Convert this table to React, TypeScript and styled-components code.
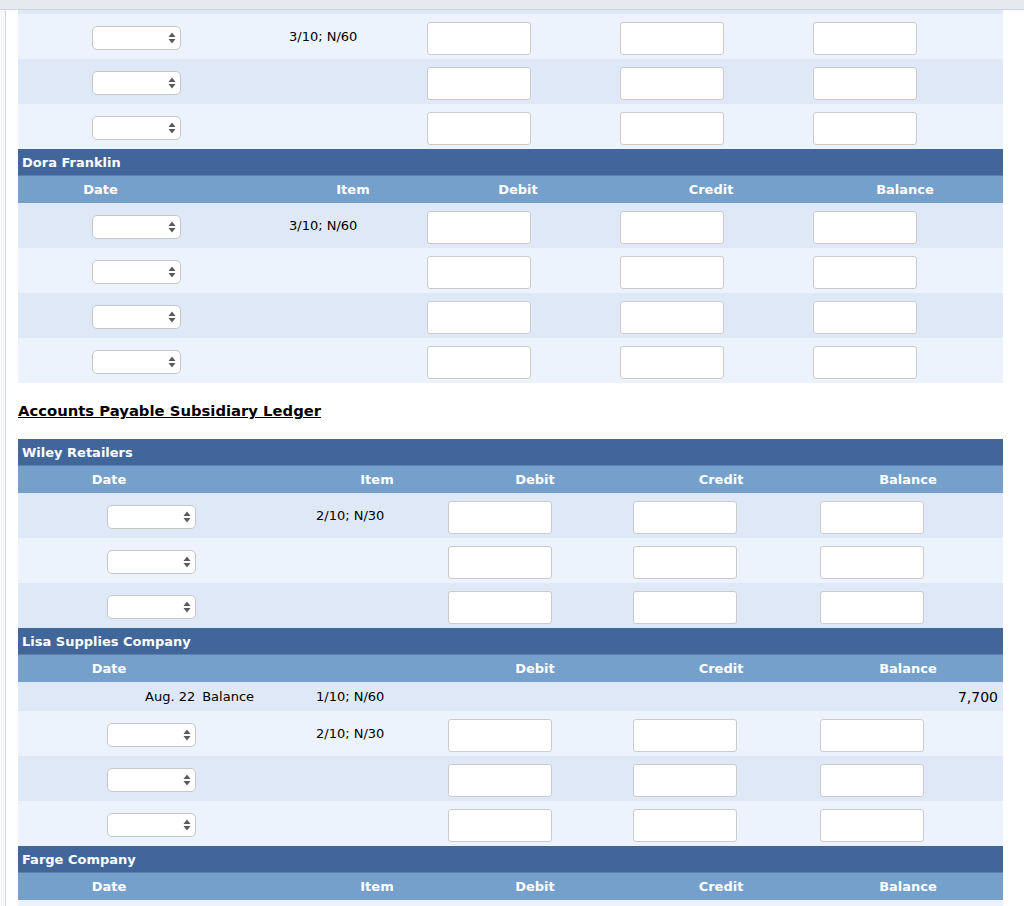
import React from 'react';
import styled, { createGlobalStyle } from 'styled-components';

const GlobalStyle = createGlobalStyle`
  html, body { margin: 0; padding: 0; background: #ffffff; }
  body { font-family: "DejaVu Sans", Verdana, sans-serif; color: #000; }
  * { box-sizing: border-box; }
`;

const COLORS = {
  name: '#41669a',
  head: '#74a0cb',
  dark: '#dfe8f6',
  light: '#edf3fd',
};

type Tone = 'dark' | 'light';

interface Layout {
  rows: string;
  datePad: number;
  head: string;
}

const headTemplate = (centers: number[], w = 80) => {
  let prev = 0;
  const parts: string[] = [];
  centers.forEach((c) => {
    parts.push(`${c - w / 2 - prev}px`, `${w}px`);
    prev = c + w / 2;
  });
  parts.push('1fr');
  return parts.join(' ');
};

const RECEIVABLE: Layout = {
  rows: '271px 138px 193px 193px 1fr',
  datePad: 74,
  head: headTemplate([82.5, 335, 500, 693, 887]),
};

const PAYABLE: Layout = {
  rows: '298px 132px 185px 187px 1fr',
  datePad: 89,
  head: headTemplate([91, 359, 517, 703, 890]),
};

const Page = styled.div`
  width: 1024px;
  height: 906px;
  overflow: hidden;
  display: flex;
  flex-direction: column;
`;

const TopBar = styled.div`
  flex-shrink: 0;
  height: 10px;
  background: #e6e9ee;
  border-bottom: 1px solid #cfd5de;
`;

const Frame = styled.div`
  flex: 1;
  display: flex;
  background: #f7f8fa;
  padding-left: 5px;
  min-height: 0;
`;

const Content = styled.main`
  flex: 1;
  background: #ffffff;
  border-left: 1px solid #d3d8df;
  padding: 0 21px 0 12px;
  display: flex;
  flex-direction: column;
  overflow: hidden;
`;

const Ledger = styled.section`
  display: flex;
  flex-direction: column;
  flex-shrink: 0;
`;

const NameBar = styled.div`
  height: 27px;
  background: ${COLORS.name};
  color: #fff;
  font-weight: bold;
  font-size: 13px;
  display: flex;
  align-items: center;
  padding-left: 4px;
  border-bottom: 1px solid #5a7fb0;
`;

const HeadRow = styled.div<{ $cols: string }>`
  height: 27px;
  display: grid;
  grid-template-columns: ${(p) => p.$cols};
  align-items: center;
  background: ${COLORS.head};
  color: #fff;
  font-weight: bold;
  font-size: 13px;
`;

const HeadLabel = styled.span<{ $col: number }>`
  grid-column: ${(p) => p.$col};
  grid-row: 1;
  text-align: center;
  white-space: nowrap;
`;

const Row = styled.div<{ $cols: string; $tone: Tone; $h: number }>`
  height: ${(p) => p.$h}px;
  display: grid;
  grid-template-columns: ${(p) => p.$cols};
  align-items: center;
  background: ${(p) => (p.$tone === 'dark' ? COLORS.dark : COLORS.light)};
  font-size: 13px;
  overflow: hidden;
`;

const DateCell = styled.div<{ $pad: number }>`
  padding-left: ${(p) => p.$pad}px;
  display: flex;
  align-items: center;
  gap: 7px;
  white-space: nowrap;
`;

const ItemCell = styled.div`
  white-space: nowrap;
`;

const AmountCell = styled.div`
  display: flex;
  align-items: center;
`;

const BalanceCell = styled.div`
  justify-self: end;
  padding-right: 5px;
  font-size: 14px;
`;

const SelectBox = styled.div`
  width: 89px;
  height: 24px;
  margin-top: 3px;
  border: 1px solid #c6c6c6;
  border-radius: 5px;
  background: #fff;
  display: flex;
  align-items: center;
  justify-content: flex-end;
  padding-right: 4px;
`;

const AmountInput = styled.input`
  width: 104px;
  height: 33px;
  margin: 3px 0 0;
  border: 1px solid #cbcbcb;
  border-radius: 3px;
  background: #fff;
  padding: 0 4px;
  font: inherit;
`;

const SectionHeading = styled.h2`
  margin: 19px 0 19px;
  font-size: 14.8px;
  line-height: 18px;
  font-weight: bold;
  text-decoration: underline;
  color: #000;
`;

const Arrows = () => (
  <svg width="8" height="12" viewBox="0 0 8 12" aria-hidden>
    <path d="M4 0.5 L7.5 5 L0.5 5 Z" fill="#5b5b5b" />
    <path d="M0.5 7 L7.5 7 L4 11.5 Z" fill="#5b5b5b" />
  </svg>
);

const Header: React.FC<{ layout: Layout; name: string; showItem?: boolean }> = ({
  layout,
  name,
  showItem = true,
}) => (
  <>
    <NameBar>{name}</NameBar>
    <HeadRow $cols={layout.head}>
      <HeadLabel $col={2}>Date</HeadLabel>
      {showItem && <HeadLabel $col={4}>Item</HeadLabel>}
      <HeadLabel $col={6}>Debit</HeadLabel>
      <HeadLabel $col={8}>Credit</HeadLabel>
      <HeadLabel $col={10}>Balance</HeadLabel>
    </HeadRow>
  </>
);

const EntryRow: React.FC<{ layout: Layout; tone: Tone; item?: string }> = ({ layout, tone, item }) => (
  <Row $cols={layout.rows} $tone={tone} $h={45}>
    <DateCell $pad={layout.datePad}>
      <SelectBox role="combobox">
        <Arrows />
      </SelectBox>
    </DateCell>
    <ItemCell>{item}</ItemCell>
    <AmountCell>
      <AmountInput type="text" />
    </AmountCell>
    <AmountCell>
      <AmountInput type="text" />
    </AmountCell>
    <AmountCell>
      <AmountInput type="text" />
    </AmountCell>
  </Row>
);

const OpeningRow: React.FC<{ layout: Layout; tone: Tone; date: string; item: string; balance: string }> = ({
  layout,
  tone,
  date,
  item,
  balance,
}) => (
  <Row $cols={layout.rows} $tone={tone} $h={29}>
    <DateCell $pad={127}>
      <span>{date}</span>
      <span>Balance</span>
    </DateCell>
    <ItemCell>{item}</ItemCell>
    <div />
    <div />
    <BalanceCell>{balance}</BalanceCell>
  </Row>
);

const tones = (start: Tone, n: number): Tone[] =>
  Array.from({ length: n }, (_, i) => ((i % 2 === 0) === (start === 'dark') ? 'dark' : 'light'));

export default function App() {
  return (
    <Page>
      <GlobalStyle />
      <TopBar />
      <Frame>
        <Content>
          <Ledger>
            <Row $cols={RECEIVABLE.rows} $tone="dark" $h={4} />
            <EntryRow layout={RECEIVABLE} tone="light" item="3/10; N/60" />
            <EntryRow layout={RECEIVABLE} tone="dark" />
            <EntryRow layout={RECEIVABLE} tone="light" />
          </Ledger>

          <Ledger>
            <Header layout={RECEIVABLE} name="Dora Franklin" />
            {tones('dark', 4).map((t, i) => (
              <EntryRow key={i} layout={RECEIVABLE} tone={t} item={i === 0 ? '3/10; N/60' : undefined} />
            ))}
          </Ledger>

          <SectionHeading>Accounts Payable Subsidiary Ledger</SectionHeading>

          <Ledger>
            <Header layout={PAYABLE} name="Wiley Retailers" />
            {tones('dark', 3).map((t, i) => (
              <EntryRow key={i} layout={PAYABLE} tone={t} item={i === 0 ? '2/10; N/30' : undefined} />
            ))}
          </Ledger>

          <Ledger>
            <Header layout={PAYABLE} name="Lisa Supplies Company" showItem={false} />
            <OpeningRow layout={PAYABLE} tone="dark" date="Aug. 22" item="1/10; N/60" balance="7,700" />
            {tones('light', 3).map((t, i) => (
              <EntryRow key={i} layout={PAYABLE} tone={t} item={i === 0 ? '2/10; N/30' : undefined} />
            ))}
          </Ledger>

          <Ledger>
            <Header layout={PAYABLE} name="Farge Company" />
            <EntryRow layout={PAYABLE} tone="light" />
          </Ledger>
        </Content>
      </Frame>
    </Page>
  );
}
